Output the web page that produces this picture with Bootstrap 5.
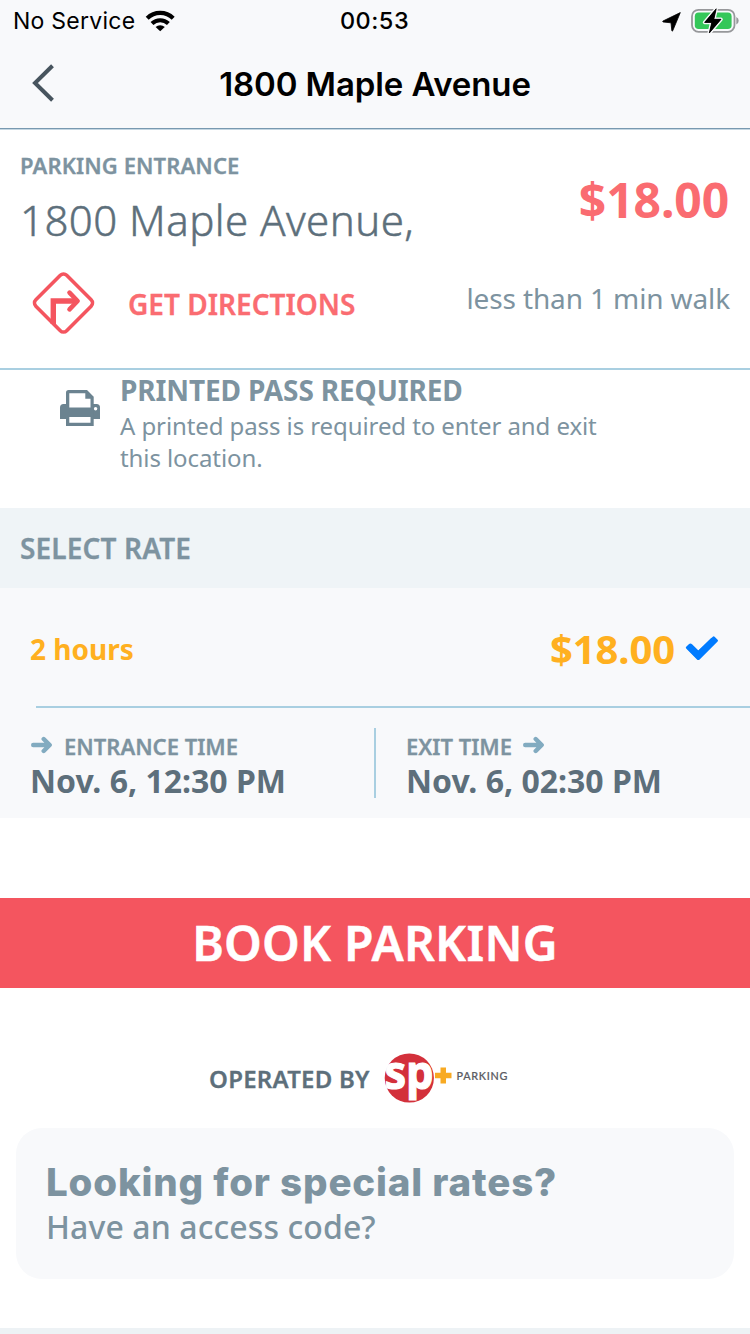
<!DOCTYPE html>
<html lang="en">
<head>
<meta charset="utf-8">
<meta name="viewport" content="width=device-width, initial-scale=1">
<title>1800 Maple Avenue</title>
<link href="https://cdn.jsdelivr.net/npm/bootstrap@5.3.0/dist/css/bootstrap.min.css" rel="stylesheet">
<style>
body{font-family:"Noto Sans",sans-serif;color:#7d93a0;background:#fff}
svg{display:block;flex:none}
.ios{font-family:Inter,"Liberation Sans",sans-serif;color:#000}
.app-head{background:#f8f9fb;height:129px;border-bottom:1px solid #7899b0}
.status{height:40px;padding:1px 11px 0 13px;font-size:23px;line-height:40px;letter-spacing:.25px}
.status .side{flex:1 1 0}
.clock{font-size:23.5px;font-weight:500;letter-spacing:.5px;margin-right:3px}
.title-row{height:88px;padding:0 32px}
.title-row .side{width:24px}
.page-title{font-size:33px;font-weight:600;line-height:88px;letter-spacing:-.1px}
.entrance{height:241px;border-top:1px solid #c5d7e2;border-bottom:2px solid #a9cfe1;padding:20px 20px 0}
.caption{font-size:22px;line-height:30px;font-weight:600;letter-spacing:.1px;-webkit-text-stroke:.3px currentColor}
.address{font-size:42px;line-height:60px;font-weight:300;letter-spacing:.45px;-webkit-text-stroke:.5px currentColor;color:#5d6f7b;margin-top:10px}
.coral{color:#fa6c71}
.price{font-size:48px;line-height:60px;font-weight:700;margin-top:20px;letter-spacing:-.1px;margin-right:1px}
.directions{font-size:28px;line-height:40px;font-weight:600;gap:33px;margin-left:12px}
.directions span{padding-top:2px;-webkit-text-stroke:.3px currentColor}
.walk{font-size:28px;line-height:40px;letter-spacing:-.12px;margin-bottom:10px}
.route-row{margin-top:21px;height:64px}
.notice{height:138px;padding-left:60px;gap:20px}
.notice svg{margin-top:19px}
.notice-title{font-size:28px;line-height:38px;font-weight:700;letter-spacing:-.13px;padding-top:1px}
.notice-text{font-size:24px;line-height:32px;letter-spacing:-.09px;width:500px;margin-top:1px}
.rate-head{height:80px;background:#eff4f7;padding:0 0 0 20px;font-size:28px;font-weight:600;letter-spacing:.15px;-webkit-text-stroke:.3px currentColor}
.panel{background:#f8f9fb}
.rate-row{height:118px;padding:4px 31px 0 30px;color:#ffb020}
.hours{font-size:28px;font-weight:700}
.rate{font-size:40px;font-weight:700;line-height:60px;letter-spacing:-.1px}
.rule{height:2px;margin-left:36px;background:#a9cfe1}
.times{height:110px;padding:20px 30px 0}
.entry{width:344px}
.times .caption{height:31px;padding-top:5px;letter-spacing:0}
.stamp{font-size:32px;line-height:40px;font-weight:700;color:#5d6f7b;margin-top:2px}
.divider{width:2px;height:70px;background:#a9cfe1;margin-right:30px}
.book,.book:hover{margin-top:80px;height:90px;background:#f4555f;color:#fff;font-size:48px;font-weight:600;line-height:90px;border:0;letter-spacing:.25px;-webkit-text-stroke:.5px currentColor}
.operated{height:140px;padding:64px 0 0 209px;gap:14px}
.operated-text{font-size:24px;line-height:54px;font-weight:600;letter-spacing:.25px;-webkit-text-stroke:.3px currentColor;color:#5d6f7b}
.promo{margin:0 16px;height:151px;border-radius:26px;background:#f8f9fb;padding:33px 30px}
.promo-title{font-family:Inter,sans-serif;font-size:38.5px;line-height:42px;font-weight:800;letter-spacing:.83px}
.promo-text{font-size:32px;line-height:48px;font-weight:500;letter-spacing:.1px}
.foot{margin-top:49px;height:6px;background:#edf2f5}
</style>
</head>
<body>
<header class="app-head ios">
  <div class="status d-flex text-nowrap">
    <div class="side d-flex align-items-center"><span>No Service</span>
      <svg style="margin-left:9px" width="32" height="24" viewBox="1 0 32 24" fill="none" stroke="#000" stroke-width="4.200">
        <path d="M4.200 9.200a18.600 18.600 0 0 1 26 0M9 14.500a12 12 0 0 1 16.400 0"/><path d="M17.200 22.300l-4.600-4.300a6.600 6.600 0 0 1 9.200 0z" fill="#000" stroke="none"/>
      </svg>
    </div>
    <span class="clock">00:53</span>
    <div class="side d-flex align-items-center justify-content-end">
      <svg width="78" height="32" viewBox="661 4 78 32">
        <path d="M680.300 11.600 663 20q-.8.6.2 1l7.800.8.800 7.800q.3 1.100.9.200z" fill="#000" stroke="#000" stroke-width=".8" stroke-linejoin="round"/>
        <rect x="692" y="8.800" width="42.500" height="22" rx="6.500" fill="none" stroke="#97989b" stroke-width="1.800"/>
        <rect x="694.800" y="11.600" width="36.800" height="16.400" rx="3.800" fill="#34c759"/>
        <path d="M736.300 16.100q2.400 1.200 2.400 3.700t-2.400 3.700z" fill="#97989b"/>
        <path d="M716.200 7.800 704.600 21.400h7.200L709.300 32 721 18.300h-7.200z" fill="#000" stroke="#f8f9fb" stroke-width="3.600" stroke-linejoin="round" paint-order="stroke"/>
        <path d="M716.200 7.800 704.600 21.400h7.200L709.300 32 721 18.300h-7.200z" fill="#000" stroke="#000" stroke-width=".8" stroke-linejoin="round"/>
      </svg>
    </div>
  </div>
  <div class="title-row d-flex align-items-center justify-content-between">
    <svg width="24" height="42" viewBox="0 0 24 42" fill="none" stroke="#47545e" stroke-width="4"><path d="M20.500 2.800 3 20l17.500 17.200"/></svg>
    <span class="page-title text-nowrap">1800 Maple Avenue</span>
    <span class="side"></span>
  </div>
</header>

<section class="entrance">
  <div class="d-flex justify-content-between">
    <div><div class="caption">PARKING ENTRANCE</div><div class="address">1800 Maple Avenue,</div></div>
    <span class="price coral">$18.00</span>
  </div>
  <div class="route-row d-flex justify-content-between align-items-center">
    <div class="directions coral d-flex align-items-center">
      <svg width="63" height="64" viewBox="0 0 63 64" fill="none" stroke="#f4555f" stroke-width="3.600">
        <rect x="9.700" y="10.200" width="43.600" height="43.600" rx="4.500" transform="rotate(45 31.500 32)"/>
        <path d="M21.300 53V30h23" stroke-width="5.400"/>
        <path d="M37.500 21.600 45.600 30l-8.100 8.400" stroke-width="4.600" stroke-linecap="round" stroke-linejoin="round"/>
      </svg>
      <span>GET DIRECTIONS</span>
    </div>
    <span class="walk">less than 1 min walk</span>
  </div>
</section>

<section class="notice d-flex align-items-start">
  <svg width="40" height="38" viewBox="0 0 40 38">
    <path d="M3.500 15h33q3.500 0 3.500 3.500V30H0V18.500Q0 15 3.500 15z" fill="#6b8390"/>
    <path d="M6 37V3.500Q6 1 8.500 1H27l6.700 6.700V37z" fill="#6b8390"/>
    <path d="M9.300 4.200h16v5.600h5.200v8.700H9.300zM9.300 28h21.200v5.700H9.300z" fill="#fff"/>
    <circle cx="35.600" cy="19.800" r="1.700" fill="#fff"/>
  </svg>
  <div><div class="notice-title">PRINTED PASS REQUIRED</div><div class="notice-text">A printed pass is required to enter and exit this location.</div></div>
</section>

<div class="rate-head d-flex align-items-center">SELECT RATE</div>
<section class="panel">
  <div class="rate-row d-flex align-items-center">
    <span class="hours me-auto">2 hours</span>
    <span class="rate">$18.00</span>
    <svg class="ms-2" width="36" height="32" viewBox="0 0 36 32"><path d="M6.800 14l8.500 8.300L30.800 7" fill="none" stroke="#007bff" stroke-width="6.600"/><path d="M5.800 11.200 3.200 13.800q-.9.900 0 1.800L14 26.400q1.300 1.200 2.600 0L34.600 8.600q.9-.9 0-1.800L31.600 3.800q-.9-.9-1.800 0L15.300 17.400 9 11.200q-1.600-1.400-3.200 0z" fill="#007bff"/></svg>
  </div>
  <div class="rule"></div>
  <div class="times d-flex text-nowrap">
    <div class="entry">
      <div class="caption d-flex align-items-center">
        <svg class="me-2" width="26" height="20" viewBox="0 0 26 20" fill="none" stroke="#82abc0" stroke-width="4.400" stroke-linecap="round" stroke-linejoin="round"><path d="M3.200 9h15.500M13.700 3l6 6-6 6"/></svg>
        <span>ENTRANCE TIME</span>
      </div>
      <div class="stamp">Nov. 6, 12:30 PM</div>
    </div>
    <div class="divider"></div>
    <div class="exit">
      <div class="caption d-flex align-items-center">
        <span>EXIT TIME</span>
        <svg style="margin-left:10px" width="26" height="20" viewBox="0 0 26 20" fill="none" stroke="#82abc0" stroke-width="4.400" stroke-linecap="round" stroke-linejoin="round"><path d="M3.200 9h15.500M13.700 3l6 6-6 6"/></svg>
      </div>
      <div class="stamp">Nov. 6, 02:30 PM</div>
    </div>
  </div>
</section>

<button class="book btn d-block w-100 rounded-0 p-0">BOOK PARKING</button>

<div class="operated d-flex align-items-start">
  <span class="operated-text">OPERATED BY</span>
  <svg width="126" height="56" viewBox="384 1052 126 56" overflow="visible">
    <circle cx="409.300" cy="1078" r="24.600" fill="#d3303b"/>
    <text x="384.500" y="1089" textLength="49" lengthAdjust="spacingAndGlyphs" font-family="Noto Sans,sans-serif" font-size="46" font-weight="700" fill="#fff" stroke="#fff" stroke-width="1.200">sp</text>
    <path d="M440.500 1067.500h5.500v5.300h5.500v5.400H446v5.400h-5.500v-5.400h-5.500v-5.400h5.500z" fill="#f8aa22"/>
    <text x="456.500" y="1079.800" textLength="51" font-family="Lato,sans-serif" font-size="10.800" font-weight="500" fill="#5b5c63" stroke="#5b5c63" stroke-width=".2">PARKING</text>
  </svg>
</div>

<section class="promo"><div class="promo-title text-nowrap">Looking for special rates?</div><div class="promo-text">Have an access code?</div></section>
<div class="foot"></div>
<script src="https://cdn.jsdelivr.net/npm/bootstrap@5.3.0/dist/js/bootstrap.bundle.min.js"></script>
</body>
</html>
